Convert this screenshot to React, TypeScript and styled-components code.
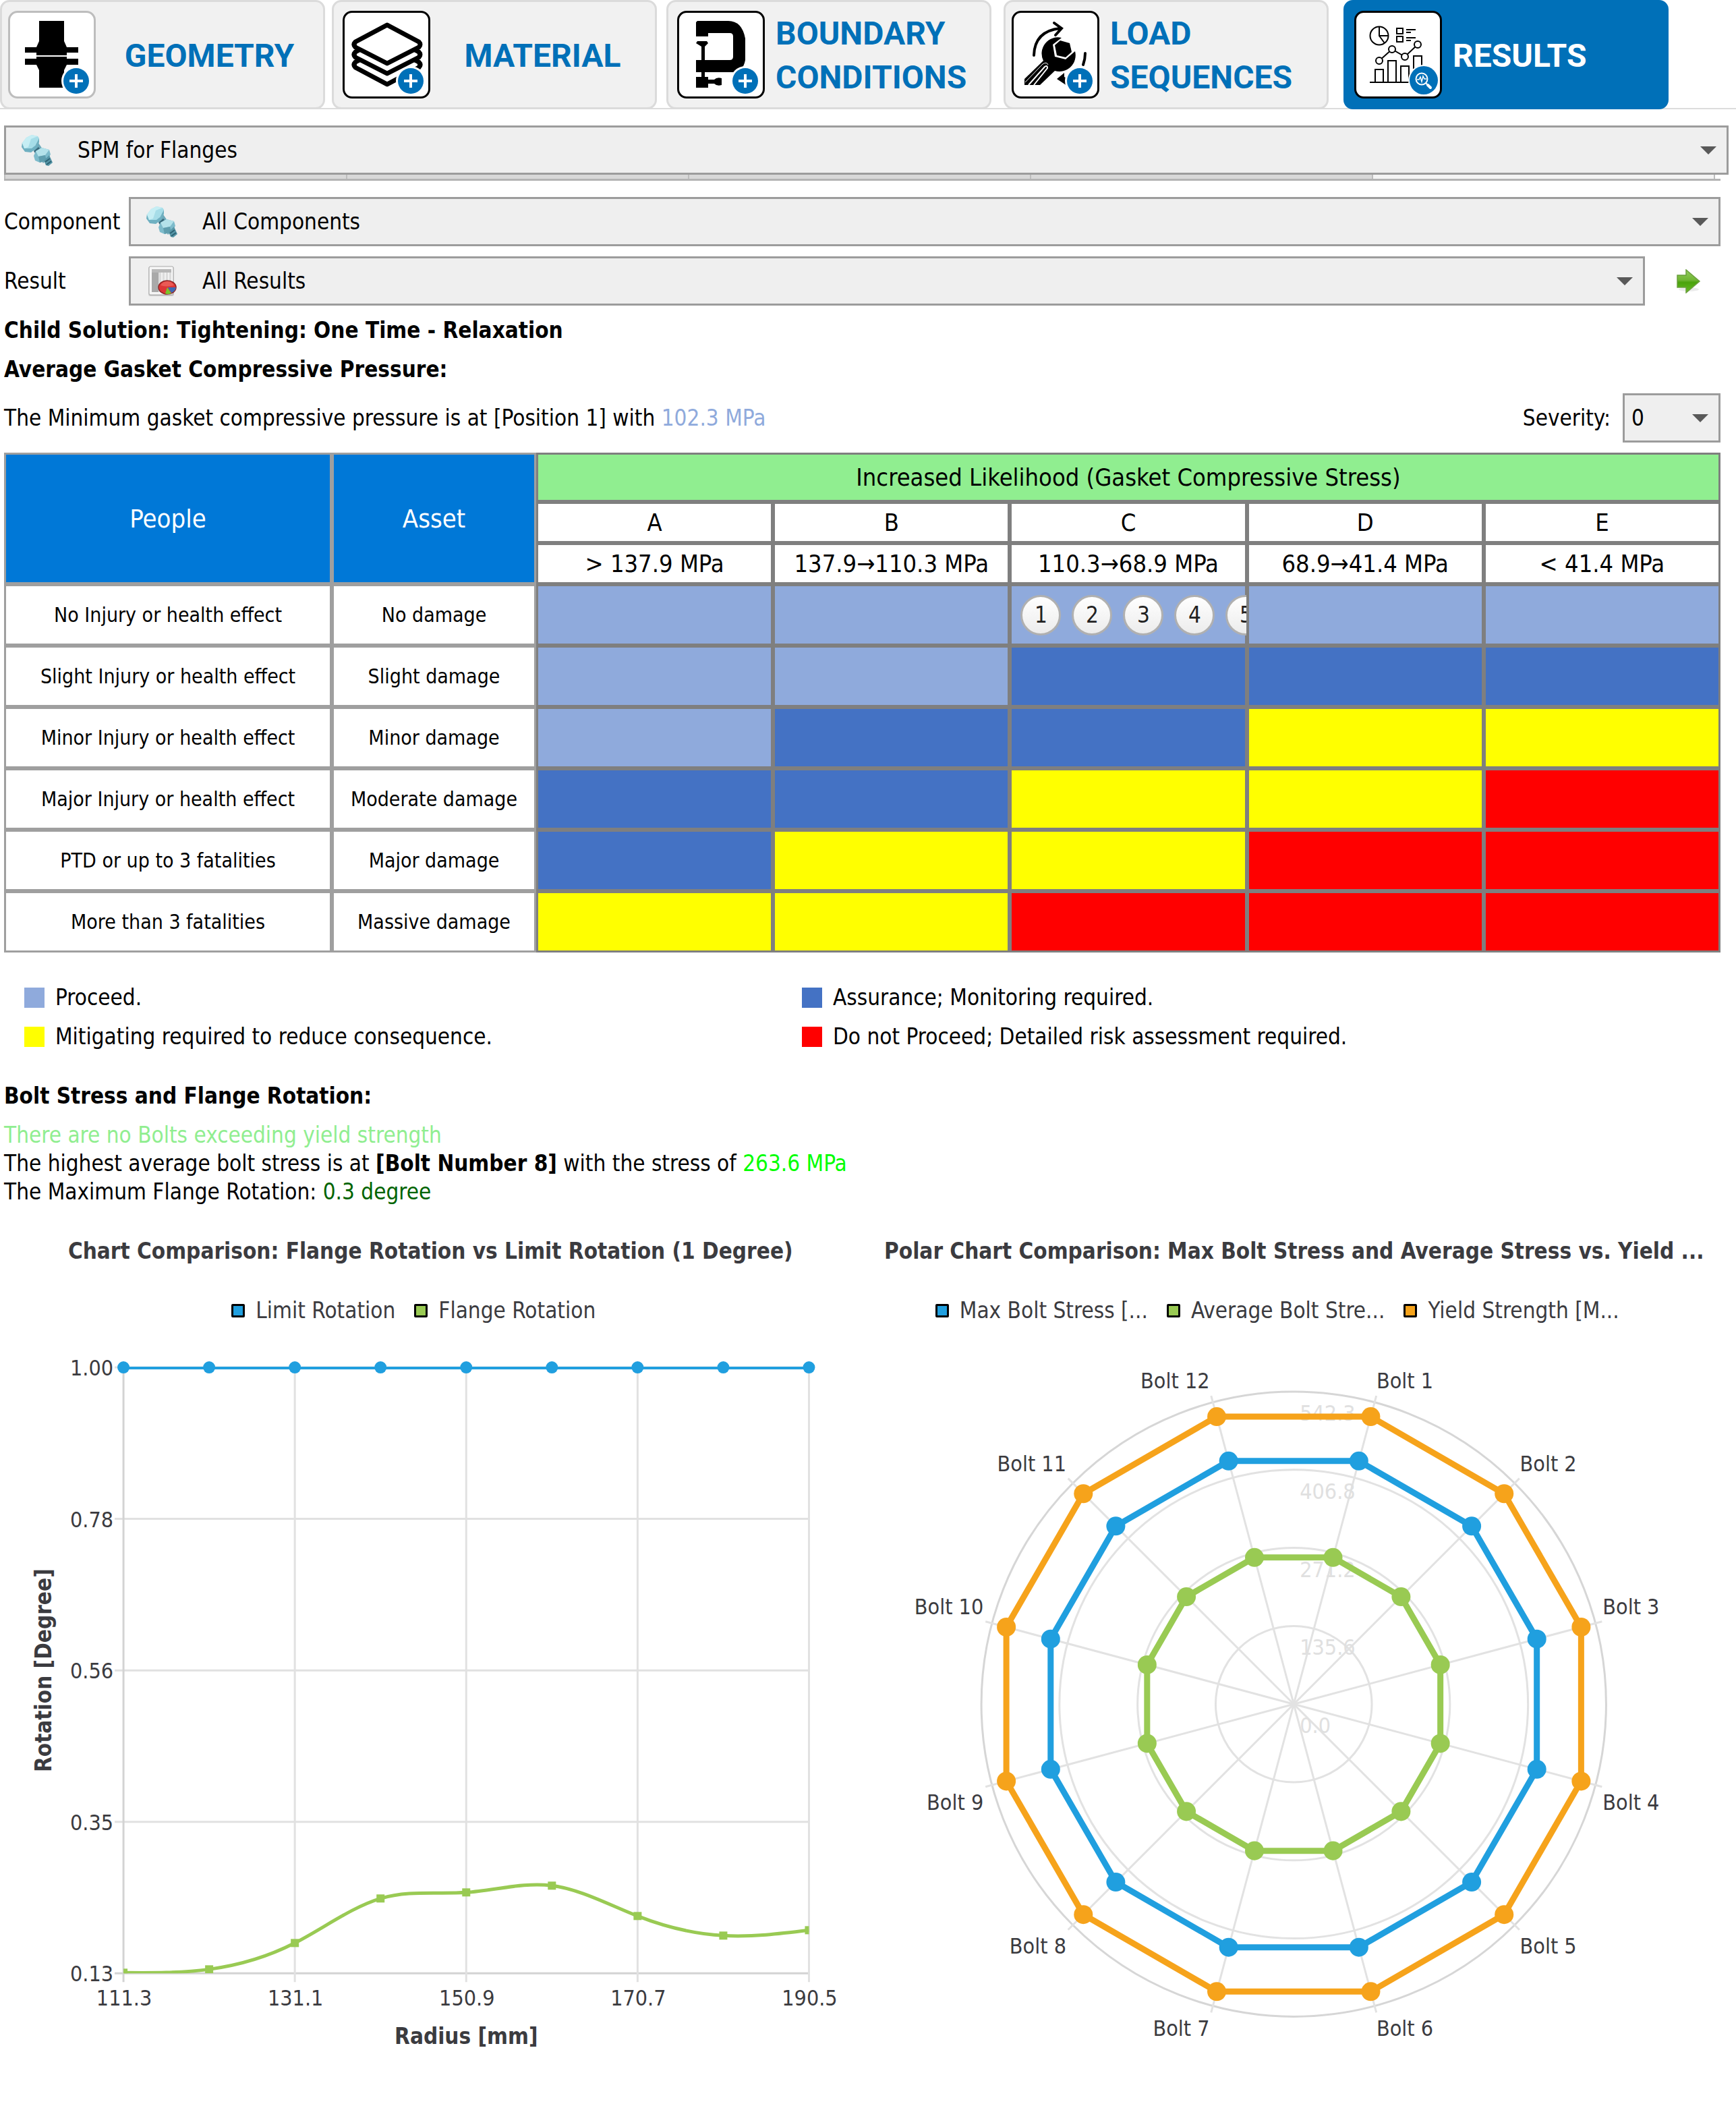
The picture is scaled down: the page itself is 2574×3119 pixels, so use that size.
import React, { useId, useState } from "react";
import styled, { createGlobalStyle } from "styled-components";

const BRAND = "#0070b8";
const UI_FONT = '"DejaVu Sans Condensed", "DejaVu Sans", sans-serif';

const GlobalStyle = createGlobalStyle`
  *, *::before, *::after { box-sizing: border-box; }
  body {
    margin: 0;
    background: #ffffff;
    color: #000000;
    font-family: ${UI_FONT};
    font-size: 33px;
    line-height: 42px;
  }
  button, select { font: inherit; color: inherit; }
`;

/* ---------- Workflow tabs ---------- */

const TabBar = styled.nav`
  display: grid;
  grid-template-columns: 492px 496px 500px 504px 1fr;
  border-bottom: 2px solid #dcdcdc;
`;

const TabButton = styled.button<{ $active?: boolean; $inset: number }>`
  display: flex;
  align-items: center;
  width: 482px;
  height: 162px;
  margin-bottom: -2px;
  padding: 0 0 0 ${(p) => p.$inset}px;
  border: 3px solid ${(p) => (p.$active ? BRAND : "#dbdbdb")};
  border-radius: 14px;
  background: ${(p) => (p.$active ? BRAND : "#f1f1f1")};
  color: ${(p) => (p.$active ? "#ffffff" : BRAND)};
  cursor: pointer;
`;

const TabIcon = styled.span<{ $muted?: boolean }>`
  flex: none;
  width: 130px;
  height: 130px;
  border: 3px solid ${(p) => (p.$muted ? "#bdbdbd" : "#000000")};
  border-radius: 14px;
  background: #ffffff;
  overflow: hidden;

  svg {
    display: block;
    width: 100%;
    height: 100%;
  }
`;

const TabLabel = styled.span<{ $centered?: boolean }>`
  flex: 1;
  padding-top: 2px;
  padding-left: ${(p) => (p.$centered ? 0 : 16)}px;
  font-family: Roboto, "Liberation Sans", sans-serif;
  font-size: 48px;
  font-weight: 700;
  line-height: 65px;
  text-align: ${(p) => (p.$centered ? "center" : "left")};
`;

const PlusBadge = () => (
  <g>
    <circle cx="101" cy="104" r="22" fill="#fff" />
    <circle cx="101" cy="104" r="19" fill={BRAND} />
    <path d="M101 94v20M91 104h20" stroke="#fff" strokeWidth="4" fill="none" />
  </g>
);

const GeometryIcon = () => (
  <svg viewBox="3 3 124 124" aria-hidden="true">
    <path d="M46 15h37v30l4 9h17v8H87v4H42v-4H25v-8h17l4-9z" />
    <path d="M42 68h45v3h17v9H87l-4 8v26H46V88l-4-8H25v-9h17z" />
    <PlusBadge />
  </svg>
);

const MaterialIcon = () => (
  <svg viewBox="3 3 124 124" aria-hidden="true">
    <g fill="#fff" stroke="#000" strokeWidth="7" strokeLinejoin="round">
      <path d="M66 52L113 76Q117 80 113 84L66 109L19 84Q15 80 19 76Z" />
      <path d="M66 36L113 61Q117 65 113 69L66 93L19 69Q15 65 19 61Z" />
      <path d="M66 21L113 46Q117 50 113 54L66 78L19 54Q15 50 19 46Z" />
    </g>
    <PlusBadge />
  </svg>
);

const ClampIcon = () => (
  <svg viewBox="3 3 124 124" aria-hidden="true">
    <path d="M30 15h46q20 0 25 26v32q-3 17-18 18H28V73h50q5 0 5-5V38q0-5-5-5H46v5H28V17z" />
    <path d="M30 45h14l2 3-5 5v20h-5V53l-8-5z" />
    <path d="M36 91h5v7h5v4h9q4-4 11-2v10q-7 2-11-2h-9v6H28V98h8z" />
    <PlusBadge />
  </svg>
);

const WrenchIcon = () => (
  <svg viewBox="3 3 124 124" aria-hidden="true">
    <path d="M33 66Q34 30 72 26M63 18l11 8-9 10" fill="none" stroke="#000" strokeWidth="4" strokeLinecap="round" />
    <path d="M109 63q0 9-3 17" fill="none" stroke="#000" strokeWidth="4" strokeLinecap="round" />
    <path d="M74 40A24 24 0 0 0 47 74L19 101v9h23l22-21A24 24 0 0 0 94 60L80 72 64 68 61 50Z" />
    <path d="M72 44l14 4 3 13-9 8-13-3-3-15z" />
    <path d="M25 110l24-27q4-3 4 2L33 110" fill="none" stroke="#fff" strokeWidth="2" />
    <path d="M20 106l26-27q6-4 8 1" fill="none" stroke="#fff" strokeWidth="1" />
    <path d="M67 101l11-9v6l4 2-3 3 3 8z" />
    <PlusBadge />
  </svg>
);

const ResultsIcon = () => (
  <svg viewBox="3 3 124 124" aria-hidden="true">
    <g fill="none" stroke="#000" strokeWidth="2">
      <circle cx="37" cy="37" r="13.5" />
      <path d="M37 23v14h14M37 37l8 11" />
      <path d="M63 26h9v8h-9zM63 38h9v8h-9zM77 28h14M77 32h7M77 40h14M77 44h7" />
      <path d="M37 74L56 57L75 68L94 50" />
      <path d="M31 106V87h12v19M50 106V74h12v32M69 106V82h12v24M88 90V67h12v20M23 106h60" />
      <g fill="#fff">
        <circle cx="37" cy="74" r="5" />
        <circle cx="56" cy="57" r="5" />
        <circle cx="75" cy="68" r="5" />
        <circle cx="94" cy="50" r="5" />
      </g>
    </g>
    <circle cx="103" cy="103" r="23" fill="#fff" />
    <circle cx="103" cy="103" r="21" fill={BRAND} />
    <g fill="none" stroke="#fff">
      <circle cx="100" cy="101" r="8.5" strokeWidth="2" />
      <path d="M106 107l3 3" strokeWidth="2" />
      <path d="M109 110l4 4" strokeWidth="4" strokeLinecap="round" />
      <path d="M93 102h3l2-4 2 7 2-8 2 4h3" strokeWidth="1.5" />
    </g>
  </svg>
);

type TabDef = {
  lines: string[];
  icon: React.ReactNode;
  inset: number;
  centered?: boolean;
  muted?: boolean;
};

const TABS: TabDef[] = [
  { lines: ["GEOMETRY"], icon: <GeometryIcon />, inset: 9, centered: true, muted: true },
  { lines: ["MATERIAL"], icon: <MaterialIcon />, inset: 13, centered: true },
  { lines: ["BOUNDARY", "CONDITIONS"], icon: <ClampIcon />, inset: 13 },
  { lines: ["LOAD", "SEQUENCES"], icon: <WrenchIcon />, inset: 9 },
  { lines: ["RESULTS"], icon: <ResultsIcon />, inset: 13 },
];

/* ---------- Selectors ---------- */

const Main = styled.main`
  padding: 24px 11px 48px 6px;
`;

const Section = styled.div`
  padding-right: 12px;
`;

const Combo = styled.div<{ $compact?: boolean }>`
  display: flex;
  align-items: center;
  height: 73px;
  width: ${(p) => (p.$compact ? "145px" : "auto")};
  padding-left: ${(p) => (p.$compact ? 10 : 23)}px;
  border: 3px solid #9c9c9c;
  background: #efefef;

  > svg:first-child {
    flex: none;
    width: 46px;
    height: 46px;
    margin-right: 37px;
  }
`;

const NativeSelect = styled.select`
  flex: 1;
  min-width: 0;
  height: 67px;
  padding: 0;
  margin-right: -40px;
  border: 0;
  background: transparent;
  appearance: none;
  outline: none;
`;

const Chevron = styled.svg`
  flex: none;
  width: 24px;
  height: 12px;
  margin: 0 15px 0 auto;
  fill: #595959;
  pointer-events: none;
`;

const BoltIcon = () => (
  <svg viewBox="0 0 46 46" aria-hidden="true">
    <path d="M17 22L25 12 40 34 32 42Z" fill="#6fa9b9" />
    <path d="M18 24l7-6 2 2-7 7zM21 29l7-6 2 2-7 7z" fill="#38697b" />
    <path d="M0 18L1 11 6 19 20 16 26 4 26 11 22 20 14 26 5 25Z" fill="#6fb0c1" />
    <path d="M1 12L7 4 15 0 24 2 26 5 20 16 15 20 4 20Z" fill="#a6dde8" />
    <path d="M1 12L7 4 15 0 24 2 14 6 10 18 4 20Z" fill="#c6eef4" />
    <path d="M18 31L21 24 30 19 41 22 43 29 37 38 27 41 20 38Z" fill="#7dbbcb" />
    <path d="M21 24L30 19 41 22 35 30 25 32Z" fill="#b4e2ea" />
    <path d="M25 32L35 30 37 38 27 41Z" fill="#5f9eae" />
    <path d="M33 38L41 30 46 41 40 46 36 45Z" fill="#5797a8" />
    <path d="M35 40l7-5M37 44l7-5" stroke="#2c6274" strokeWidth="2" fill="none" />
  </svg>
);

const SheetIcon = () => (
  <svg viewBox="0 0 46 46" aria-hidden="true">
    <rect x="3" y="1" width="38" height="44" rx="3" fill="#c9c9c9" />
    <rect x="4" y="1" width="36" height="42" rx="2" fill="#f6f6f6" stroke="#a9a9a9" />
    <rect x="8" y="5" width="29" height="34" fill="#dcdcdc" />
    <rect x="8" y="5" width="10" height="34" fill="#a9a9a9" />
    <rect x="8" y="5" width="29" height="5" fill="#b8b8b8" />
    <path d="M23 10v29M28 10v29M33 10v29" stroke="#f2f2f2" strokeWidth="2" />
    <ellipse cx="31" cy="32" rx="13" ry="10" fill="#dd3636" stroke="#8f2424" strokeWidth="1.5" />
    <path d="M32 32L44 32Q43 38 37 40Z" fill="#3e6ab4" />
    <path d="M31 32L37 41Q31 43 28 41Z" fill="#79c52c" />
    <path d="M21 29q3-6 10-6 7 0 10 6-10 3-20 0z" fill="#f06a62" opacity="0.7" />
  </svg>
);

const GoIcon = () => {
  const id = useId();
  return (
    <svg viewBox="0 0 36 36" width="36" height="36" aria-hidden="true">
      <defs>
        <linearGradient id={id} x1="0" y1="0" x2="0" y2="1">
          <stop offset="0" stopColor="#93cc5e" />
          <stop offset="0.45" stopColor="#6fb533" />
          <stop offset="0.55" stopColor="#4aa30c" />
          <stop offset="1" stopColor="#66bb22" />
        </linearGradient>
      </defs>
      <ellipse cx="18" cy="30" rx="15" ry="3" fill="#000" opacity="0.08" />
      <path d="M1 9h13V1l20 17-20 17v-8H1z" fill={`url(#${id})`} stroke="#6a9f3c" strokeWidth="1.5" />
    </svg>
  );
};

const Strip = styled.div`
  display: grid;
  grid-template-columns: repeat(5, 507px) 1fr;
  height: 9px;
  border-bottom: 3px solid #b4b4b4;
`;

const StripCell = styled.span<{ $current?: boolean }>`
  border-left: 2px solid #bdbdbd;
  background: ${(p) => (p.$current ? "#f4f4f4" : "#d8d8d8")};

  &:last-child {
    background: transparent;
  }
`;

const Fields = styled.div`
  display: grid;
  grid-template-columns: 185px 1fr;
  row-gap: 15px;
  align-items: center;
  margin-top: 24px;
`;

const FieldWithAction = styled.div`
  display: grid;
  grid-template-columns: 1fr 112px;
  align-items: center;
`;

const GoButton = styled.button`
  display: flex;
  justify-content: center;
  margin-left: 18px;
  padding: 0;
  border: 0;
  background: transparent;
  cursor: pointer;
`;

const Heading = styled.h2<{ $top: number }>`
  margin: ${(p) => p.$top}px 0 0;
  font-size: 33px;
  font-weight: 700;
  line-height: 42px;
`;

const Summary = styled.div`
  display: flex;
  align-items: center;
  justify-content: space-between;
  margin: 14px 0 15px;
`;

const Paragraph = styled.p`
  margin: 0;
`;

const Value = styled.span<{ $color: string }>`
  color: ${(p) => p.$color};
`;

const SeverityField = styled.div`
  display: flex;
  align-items: center;
  gap: 18px;
`;

function ComboBox({
  id,
  icon,
  options,
  compact,
  label,
}: {
  id: string;
  icon?: React.ReactNode;
  options: string[];
  compact?: boolean;
  label?: string;
}) {
  const [value, setValue] = useState(options[0]);
  return (
    <Combo $compact={compact}>
      {icon}
      <NativeSelect id={id} aria-label={label} value={value} onChange={(e) => setValue(e.target.value)}>
        {options.map((o) => (
          <option key={o}>{o}</option>
        ))}
      </NativeSelect>
      <Chevron viewBox="0 0 24 12" aria-hidden="true">
        <path d="M0 0h24L12 12z" />
      </Chevron>
    </Combo>
  );
}

/* ---------- Risk matrix ---------- */

const LEVELS = {
  proceed: "#8faadc",
  monitor: "#4472c4",
  mitigate: "#ffff00",
  stop: "#ff0000",
};
type Level = keyof typeof LEVELS;

const Matrix = styled.table`
  width: 100%;
  table-layout: fixed;
  border-collapse: separate;
  border-spacing: 0;
  text-align: center;
`;

const Row = styled.tr<{ $h: number }>`
  height: ${(p) => p.$h}px;
`;

const CornerHead = styled.th`
  padding: 0;
  border: 3px solid #9f9f9f;
  background: #0078d7;
  color: #ffffff;
  font-size: 38px;
  font-weight: 400;
`;

const TopHead = styled.th<{ $banner?: boolean }>`
  padding: 0;
  border: 3px solid #7f7f7f;
  background: ${(p) => (p.$banner ? "#90ee90" : "#ffffff")};
  font-size: 36px;
  font-weight: 400;
  white-space: nowrap;
`;

const EffectCell = styled.td`
  padding: 0;
  border: 3px solid #9f9f9f;
  font-size: 30px;
`;

const LevelCell = styled.td<{ $level: Level }>`
  padding: 0;
  border: 3px solid #7f7f7f;
  background: ${(p) => LEVELS[p.$level]};
`;

const Positions = styled.div`
  display: flex;
  gap: 16px;
  margin-right: -2px;
  padding-left: 13px;
  overflow: hidden;
`;

const PositionButton = styled.button`
  flex: none;
  width: 60px;
  height: 60px;
  padding: 0;
  border: 3px solid #b0b0b0;
  border-radius: 50%;
  background: linear-gradient(#ffffff, #ececec);
  color: #222222;
  cursor: pointer;
`;

const RANGES = ["> 137.9 MPa", "137.9→110.3 MPa", "110.3→68.9 MPa", "68.9→41.4 MPa", "< 41.4 MPa"];

const EFFECTS: { people: string; asset: string; levels: Level[] }[] = [
  { people: "No Injury or health effect", asset: "No damage", levels: ["proceed", "proceed", "proceed", "proceed", "proceed"] },
  { people: "Slight Injury or health effect", asset: "Slight damage", levels: ["proceed", "proceed", "monitor", "monitor", "monitor"] },
  { people: "Minor Injury or health effect", asset: "Minor damage", levels: ["proceed", "monitor", "monitor", "mitigate", "mitigate"] },
  { people: "Major Injury or health effect", asset: "Moderate damage", levels: ["monitor", "monitor", "mitigate", "mitigate", "stop"] },
  { people: "PTD or up to 3 fatalities", asset: "Major damage", levels: ["monitor", "mitigate", "mitigate", "stop", "stop"] },
  { people: "More than 3 fatalities", asset: "Massive damage", levels: ["mitigate", "mitigate", "stop", "stop", "stop"] },
];

const Key = styled.ul`
  display: grid;
  grid-template-columns: 1153px 1fr;
  row-gap: 16px;
  margin: 46px 0 0;
  padding: 0 0 0 30px;
  list-style: none;
`;

const KeyItem = styled.li`
  display: flex;
  align-items: center;
  gap: 16px;
`;

const Swatch = styled.span<{ $level: Level }>`
  width: 30px;
  height: 30px;
  background: ${(p) => LEVELS[p.$level]};
`;

const KEY: [Level, string][] = [
  ["proceed", "Proceed."],
  ["monitor", "Assurance; Monitoring required."],
  ["mitigate", "Mitigating required to reduce consequence."],
  ["stop", "Do not Proceed; Detailed risk assessment required."],
];

const Findings = styled.div`
  margin-top: 16px;
`;

/* ---------- Charts ---------- */

const INK = "#3b3b3f";
const BLUE = "#209fdf";
const GREEN = "#99ca53";
const ORANGE = "#f6a31b";

const Charts = styled.div`
  display: grid;
  grid-template-columns: 1fr 1fr;
  gap: 16px;
  margin-top: 46px;
  color: ${INK};
`;

const ChartPanel = styled.figure`
  min-width: 0;
  margin: 0;
`;

const ChartTitle = styled.figcaption`
  font-weight: 700;
  text-align: center;
  white-space: nowrap;
`;

const ChartKey = styled.div`
  display: flex;
  justify-content: center;
  gap: 28px;
  margin: 46px 0 16px;
  padding-right: 50px;
  white-space: nowrap;
`;

const ChartKeyItem = styled.span`
  display: flex;
  align-items: center;
  gap: 16px;
`;

const ChartSwatch = styled.span<{ $color: string }>`
  width: 20px;
  height: 20px;
  border: 3px solid #000000;
  border-radius: 2px;
  background: ${(p) => p.$color};
`;

const Plot = styled.svg`
  display: block;
  width: 100%;
  font-family: ${UI_FONT};
  font-size: 32px;
  fill: ${INK};
`;

const AxisTitle = styled.text`
  font-size: 33px;
  font-weight: 700;
`;

function SeriesKey({ items }: { items: [string, string][] }) {
  return (
    <ChartKey>
      {items.map(([color, name]) => (
        <ChartKeyItem key={name}>
          <ChartSwatch $color={color} />
          {name}
        </ChartKeyItem>
      ))}
    </ChartKey>
  );
}

/* Natural cubic spline through evenly spaced points. */
function splinePath(xs: number[], ys: number[]) {
  const n = ys.length;
  const slopes = new Array<number>(n);
  const c = new Array<number>(n);
  const d = new Array<number>(n);
  c[0] = 0.5;
  d[0] = (3 * (ys[1] - ys[0])) / 2;
  for (let i = 1; i < n; i++) {
    const last = i === n - 1;
    const diag = last ? 2 : 4;
    const rhs = last ? 3 * (ys[i] - ys[i - 1]) : 3 * (ys[i + 1] - ys[i - 1]);
    const m = diag - c[i - 1];
    c[i] = 1 / m;
    d[i] = (rhs - d[i - 1]) / m;
  }
  slopes[n - 1] = d[n - 1];
  for (let i = n - 2; i >= 0; i--) slopes[i] = d[i] - c[i] * slopes[i + 1];
  const step = (xs[1] - xs[0]) / 3;
  let path = `M${xs[0]} ${ys[0]}`;
  for (let i = 0; i < n - 1; i++) {
    path += `C${xs[i] + step} ${ys[i] + slopes[i] / 3} ${xs[i + 1] - step} ${ys[i + 1] - slopes[i + 1] / 3} ${xs[i + 1]} ${ys[i + 1]}`;
  }
  return path;
}

const LINE = { left: 177, right: 1193, top: 47, bottom: 945 };

function RotationChart() {
  const clip = useId();
  const { left, right, top, bottom } = LINE;
  const xs = Array.from({ length: 9 }, (_, i) => left + ((right - left) * i) / 8);
  const ys = [944, 939, 900, 834, 825, 815, 860, 889, 881];
  const yTicks = ["1.00", "0.78", "0.56", "0.35", "0.13"];
  const xTicks = ["111.3", "131.1", "150.9", "170.7", "190.5"];
  return (
    <Plot viewBox="0 0 1264 1090" role="img" aria-label="Flange rotation against radius">
      <clipPath id={clip}>
        <rect x={left} y={top} width={right - left} height={bottom - top} />
      </clipPath>
      {yTicks.map((t, i) => {
        const y = top + ((bottom - top) * i) / 4;
        return (
          <g key={t}>
            <line x1={left - 13} x2={right} y1={y} y2={y} stroke={i === 4 ? "#d3d3d3" : "#e1e1e1"} strokeWidth="3" />
            <text x={left - 15} y={y + 12} textAnchor="end">{t}</text>
          </g>
        );
      })}
      {xTicks.map((t, i) => {
        const x = left + ((right - left) * i) / 4;
        return (
          <g key={t}>
            <line x1={x} x2={x} y1={top} y2={bottom + 13} stroke={i === 0 ? "#d3d3d3" : "#e1e1e1"} strokeWidth="3" />
            <text x={x + 1} y={bottom + 48} textAnchor="middle">{t}</text>
          </g>
        );
      })}
      <line x1={left} x2={right} y1={top + 1} y2={top + 1} stroke={BLUE} strokeWidth="4" />
      {xs.map((x) => (
        <circle key={x} cx={x} cy={top} r="9" fill={BLUE} />
      ))}
      <g clipPath={`url(#${clip})`}>
        <path d={splinePath(xs, ys)} fill="none" stroke={GREEN} strokeWidth="5" />
        {xs.map((x, i) => (
          <rect key={x} x={x - 6} y={ys[i] - 6} width="12" height="12" fill={GREEN} />
        ))}
      </g>
      <AxisTitle x={(left + right) / 2} y="1050" textAnchor="middle">Radius [mm]</AxisTitle>
      <AxisTitle transform="translate(70 496) rotate(-90)" textAnchor="middle">Rotation [Degree]</AxisTitle>
    </Plot>
  );
}

const POLAR = { cx: 631, cy: 546, r: 463 };

function spoke(i: number, r: number) {
  const a = ((15 + 30 * i) * Math.PI) / 180;
  return [POLAR.cx + r * Math.sin(a), POLAR.cy - r * Math.cos(a)];
}

function StressChart() {
  const { cx, cy, r } = POLAR;
  const bolts = Array.from({ length: 12 }, (_, i) => i);
  const rings = ["0.0", "135.6", "271.2", "406.8", "542.3"];
  const series: [string, number][] = [
    [BLUE, 373],
    [GREEN, 225],
    [ORANGE, 441],
  ];
  return (
    <Plot viewBox="0 0 1264 1090" role="img" aria-label="Bolt stress by bolt number">
      <g fill="none" strokeWidth="3">
        {[1, 2, 3, 4].map((k) => (
          <circle key={k} cx={cx} cy={cy} r={(r * k) / 4} stroke={k === 4 ? "#d6d6d6" : "#e2e2e2"} />
        ))}
        {bolts.map((i) => {
          const [x, y] = spoke(i, r + 10);
          return <line key={i} x1={cx} y1={cy} x2={x} y2={y} stroke="#e2e2e2" />;
        })}
      </g>
      {rings.map((t, k) => (
        <text key={t} x={cx + 9} y={cy + 43 - (r * k) / 4} fill="#e0e0e0">{t}</text>
      ))}
      {series.map(([color, radius]) => (
        <g key={color}>
          <polygon
            points={bolts.map((i) => spoke(i, radius).join(",")).join(" ")}
            fill="none"
            stroke={color}
            strokeWidth="9"
          />
          {bolts.map((i) => {
            const [x, y] = spoke(i, radius);
            return <circle key={i} cx={x} cy={y} r="14" fill={color} />;
          })}
        </g>
      ))}
      {bolts.map((i) => {
        const [x, y] = spoke(i, r + 11);
        const upper = i < 3 || i > 8;
        const right = i < 6;
        return (
          <text key={i} x={right ? x : x - 2} y={upper ? y - 10 : y + 34} textAnchor={right ? "start" : "end"}>
            {`Bolt ${i + 1}`}
          </text>
        );
      })}
    </Plot>
  );
}

/* ---------- Page ---------- */

export default function App() {
  return (
    <>
      <GlobalStyle />
      <TabBar>
        {TABS.map((tab, i) => (
          <TabButton key={tab.lines[0]} type="button" $active={i === 4} $inset={tab.inset}>
            <TabIcon $muted={tab.muted}>{tab.icon}</TabIcon>
            <TabLabel $centered={tab.centered}>
              {tab.lines.map((line, n) => (
                <React.Fragment key={line}>
                  {n > 0 && <br />}
                  {line}
                </React.Fragment>
              ))}
            </TabLabel>
          </TabButton>
        ))}
      </TabBar>

      <Main>
        <ComboBox id="module" label="Module" icon={<BoltIcon />} options={["SPM for Flanges"]} />

        <Section>
          <Strip aria-hidden="true">
            {[0, 1, 2, 3, 4, 5].map((n) => (
              <StripCell key={n} $current={n === 4} />
            ))}
          </Strip>

          <Fields>
            <label htmlFor="component">Component</label>
            <ComboBox id="component" icon={<BoltIcon />} options={["All Components"]} />
            <label htmlFor="result">Result</label>
            <FieldWithAction>
              <ComboBox id="result" icon={<SheetIcon />} options={["All Results"]} />
              <GoButton type="button" aria-label="Show result">
                <GoIcon />
              </GoButton>
            </FieldWithAction>
          </Fields>

          <Heading $top={16}>Child Solution: Tightening: One Time - Relaxation</Heading>
          <Heading $top={16}>Average Gasket Compressive Pressure:</Heading>

          <Summary>
            <Paragraph>
              The Minimum gasket compressive pressure is at [Position 1] with{" "}
              <Value $color={LEVELS.proceed}>102.3 MPa</Value>
            </Paragraph>
            <SeverityField>
              <label htmlFor="severity">Severity:</label>
              <ComboBox id="severity" compact options={["0", "1", "2", "3", "4", "5"]} />
            </SeverityField>
          </Summary>

          <Matrix>
            <colgroup>
              <col style={{ width: "19.1%" }} />
              <col style={{ width: "11.9%" }} />
              <col span={5} />
            </colgroup>
            <thead>
              <Row $h={73}>
                <CornerHead rowSpan={3} scope="col">People</CornerHead>
                <CornerHead rowSpan={3} scope="col">Asset</CornerHead>
                <TopHead colSpan={5} $banner>Increased Likelihood (Gasket Compressive Stress)</TopHead>
              </Row>
              <Row $h={61}>
                {["A", "B", "C", "D", "E"].map((c) => (
                  <TopHead key={c} scope="col">{c}</TopHead>
                ))}
              </Row>
              <Row $h={61}>
                {RANGES.map((c) => (
                  <TopHead key={c} scope="col">{c}</TopHead>
                ))}
              </Row>
            </thead>
            <tbody>
              {EFFECTS.map((e, r) => (
                <Row key={e.people} $h={91}>
                  <EffectCell>{e.people}</EffectCell>
                  <EffectCell>{e.asset}</EffectCell>
                  {e.levels.map((level, c) => (
                    <LevelCell key={c} $level={level}>
                      {r === 0 && c === 2 && (
                        <Positions>
                          {[1, 2, 3, 4, 5].map((n) => (
                            <PositionButton key={n} type="button">{n}</PositionButton>
                          ))}
                        </Positions>
                      )}
                    </LevelCell>
                  ))}
                </Row>
              ))}
            </tbody>
          </Matrix>

          <Key>
            {KEY.map(([level, text]) => (
              <KeyItem key={level}>
                <Swatch $level={level} />
                {text}
              </KeyItem>
            ))}
          </Key>

          <Heading $top={46}>Bolt Stress and Flange Rotation:</Heading>
          <Findings>
            <Paragraph>
              <Value $color="#90ee90">There are no Bolts exceeding yield strength</Value>
            </Paragraph>
            <Paragraph>
              The highest average bolt stress is at <strong>[Bolt Number 8]</strong> with the stress of{" "}
              <Value $color="#00ff00">263.6 MPa</Value>
            </Paragraph>
            <Paragraph>
              The Maximum Flange Rotation: <Value $color="#006400">0.3 degree</Value>
            </Paragraph>
          </Findings>

          <Charts>
            <ChartPanel>
              <ChartTitle>Chart Comparison: Flange Rotation vs Limit Rotation (1 Degree)</ChartTitle>
              <SeriesKey items={[[BLUE, "Limit Rotation"], [GREEN, "Flange Rotation"]]} />
              <RotationChart />
            </ChartPanel>
            <ChartPanel>
              <ChartTitle>Polar Chart Comparison: Max Bolt Stress and Average Stress vs. Yield ...</ChartTitle>
              <SeriesKey
                items={[
                  [BLUE, "Max Bolt Stress [..."],
                  [GREEN, "Average Bolt Stre..."],
                  [ORANGE, "Yield Strength [M..."],
                ]}
              />
              <StressChart />
            </ChartPanel>
          </Charts>
        </Section>
      </Main>
    </>
  );
}
